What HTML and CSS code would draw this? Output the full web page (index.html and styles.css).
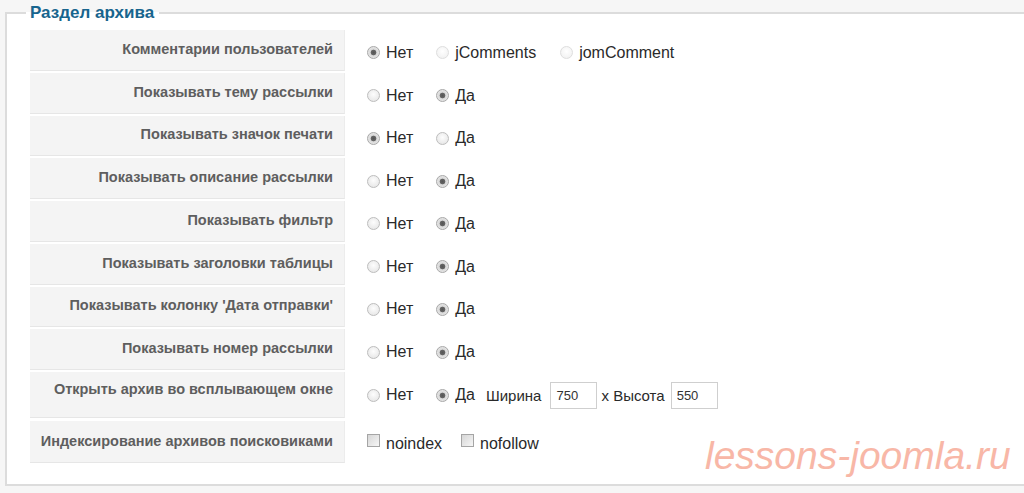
FILE: index.html
```html
<!DOCTYPE html>
<html lang="ru">
<head>
    <meta charset="UTF-8">
    <title>Раздел архива</title>
    <link rel="stylesheet" href="styles.css">
</head>
<body>
    <fieldset class="panel">
        <legend>Раздел архива</legend>
        <div class="params">
            <div class="key">Комментарии пользователей</div>
            <div class="val">
                <label class="opt"><input type="radio" name="comments" checked> Нет</label>
                <label class="opt off"><input type="radio" name="comments" disabled> jComments</label>
                <label class="opt off"><input type="radio" name="comments" disabled> jomComment</label>
            </div>

            <div class="key">Показывать тему рассылки</div>
            <div class="val">
                <label class="opt"><input type="radio" name="subject"> Нет</label>
                <label class="opt"><input type="radio" name="subject" checked> Да</label>
            </div>

            <div class="key">Показывать значок печати</div>
            <div class="val">
                <label class="opt"><input type="radio" name="print" checked> Нет</label>
                <label class="opt"><input type="radio" name="print"> Да</label>
            </div>

            <div class="key">Показывать описание рассылки</div>
            <div class="val">
                <label class="opt"><input type="radio" name="desc"> Нет</label>
                <label class="opt"><input type="radio" name="desc" checked> Да</label>
            </div>

            <div class="key">Показывать фильтр</div>
            <div class="val">
                <label class="opt"><input type="radio" name="filter"> Нет</label>
                <label class="opt"><input type="radio" name="filter" checked> Да</label>
            </div>

            <div class="key">Показывать заголовки таблицы</div>
            <div class="val">
                <label class="opt"><input type="radio" name="headers"> Нет</label>
                <label class="opt"><input type="radio" name="headers" checked> Да</label>
            </div>

            <div class="key">Показывать колонку 'Дата отправки'</div>
            <div class="val">
                <label class="opt"><input type="radio" name="senddate"> Нет</label>
                <label class="opt"><input type="radio" name="senddate" checked> Да</label>
            </div>

            <div class="key">Показывать номер рассылки</div>
            <div class="val">
                <label class="opt"><input type="radio" name="number"> Нет</label>
                <label class="opt"><input type="radio" name="number" checked> Да</label>
            </div>

            <div class="key popup">Открыть архив во всплывающем окне</div>
            <div class="val popup">
                <label class="opt"><input type="radio" name="popup"> Нет</label>
                <label class="opt short"><input type="radio" name="popup" checked> Да</label>
                <span class="size">Ширина</span>
                <input type="text" class="num" value="750">
                <span class="size x">x Высота</span>
                <input type="text" class="num" value="550">
            </div>

            <div class="key index">Индексирование архивов поисковиками</div>
            <div class="val index">
                <label class="opt box"><input type="checkbox"> noindex</label>
                <label class="opt box"><input type="checkbox"> nofollow</label>
            </div>
        </div>
    </fieldset>
    <div class="watermark">lessons-joomla.ru</div>
</body>
</html>
```

FILE: styles.css
```css
body {
    margin: 0;
    background-color: #f6f6f6;
    font-family: "Liberation Sans", Arial, sans-serif;
    width: 1024px;
    height: 493px;
    overflow: hidden;
    position: relative;
}
.panel {
    margin: 3px -20px 0 5px;
    padding: 7px 0 21px 23px;
    border: 2px solid #dcdcdc;
    background-color: #fff;
    min-width: 0;
}
.panel legend {
    margin-left: -4px;
    padding: 0 5px 0 4px;
    font-size: 17px;
    line-height: 20px;
    font-weight: bold;
    color: #18658e;
}
.params {
    display: grid;
    grid-template-columns: 315px 1fr;
    grid-template-rows: repeat(8, 40.75px) 46px 43px;
    row-gap: 2px;
    column-gap: 2px;
}
.key {
    display: flex;
    align-items: center;
    justify-content: flex-end;
    padding: 0 11px 2px 0;
    background-color: #f4f4f4;
    border-bottom: 1px solid #e6e6e6;
    border-right: 1px solid #ececec;
    font-size: 14.5px;
    font-weight: bold;
    color: #5e5e5e;
    white-space: nowrap;
}
.val {
    display: flex;
    align-items: center;
    padding: 5px 0 0 20px;
    font-size: 16px;
    color: #2a2a2a;
}
.key.popup {
    padding-bottom: 11px;
}
.val.popup {
    padding-top: 0;
}
.key.index,
.val.index {
    margin-top: 1px;
}
.val.index {
    padding-top: 4px;
}
.opt {
    display: flex;
    align-items: center;
    margin-right: 23px;
}
.opt.short {
    margin-right: 11px;
}
.opt.off {
    margin-right: 24px;
}
.opt.box {
    margin-right: 19px;
}
.opt input {
    margin: 0 6px 0 0;
}
input[type="radio"] {
    appearance: none;
    width: 13px;
    height: 13px;
    border-radius: 50%;
    border: 1px solid #bdbdbd;
    background: radial-gradient(circle at 50% 40%, #fdfdfd 0%, #e2e2e2 100%);
    box-sizing: border-box;
}
input[type="radio"]:checked {
    border-color: #a8a8a8;
    background: radial-gradient(circle, #555 0, #666 2.5px, #d8d8d8 3.2px, #f2f2f2 100%);
}
input[type="radio"]:disabled {
    border-color: #dedede;
    background: radial-gradient(circle at 50% 40%, #fff 0%, #eee 100%);
}
input[type="checkbox"] {
    appearance: none;
    width: 13px;
    height: 13px;
    border: 1px solid #a5a5a5;
    background: linear-gradient(135deg, #d6d6d6, #f6f6f6);
    box-sizing: border-box;
    position: relative;
    top: -4px;
}
.size {
    margin-right: 9px;
    font-size: 15px;
}
.size.x {
    margin-left: 4px;
    margin-right: 6px;
}
.num {
    width: 47px;
    height: 27px;
    box-sizing: border-box;
    border: 1px solid #cfcfcf;
    padding: 0 5px;
    font-family: "Liberation Sans", Arial, sans-serif;
    font-size: 13px;
    color: #333;
}
.watermark {
    position: absolute;
    left: 705px;
    top: 433px;
    font-size: 39px;
    font-style: italic;
    color: #f8b7a7;
    line-height: 46px;
}
```
